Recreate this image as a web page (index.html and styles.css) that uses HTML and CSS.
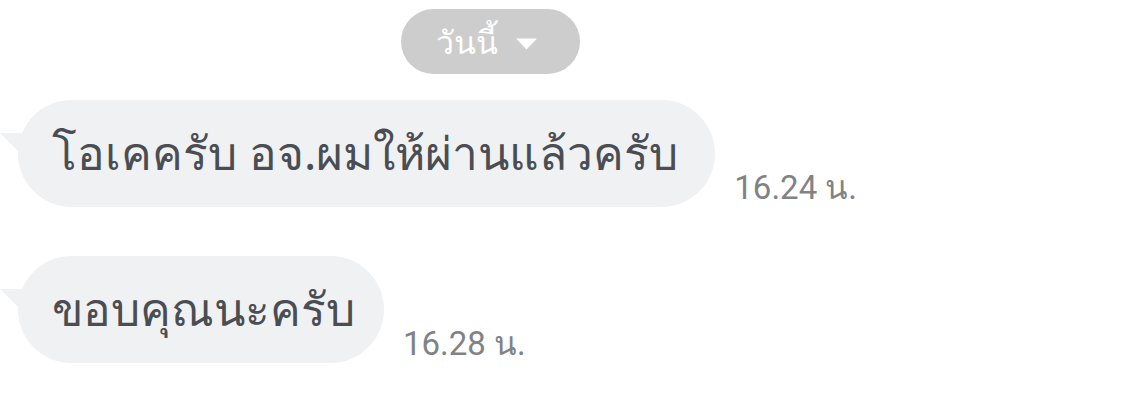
FILE: index.html
```html
<!DOCTYPE html>
<html lang="th">
<head>
<meta charset="utf-8">
<link rel="stylesheet" href="styles.css">
</head>
<body>
<div class="chat">
  <div class="date-row">
    <div class="date-pill">
      <span class="date-text">วันนี้</span>
      <svg class="caret" width="21" height="12" viewBox="0 0 21 12"><path d="M0 0.5 L21 0.5 L10.5 11.5 Z" fill="#ffffff"/></svg>
    </div>
  </div>
  <div class="msg msg-1">
    <div class="bubble">โอเคครับ อจ.ผมให้ผ่านแล้วครับ</div>
    <div class="time">16.24 น.</div>
  </div>
  <div class="msg msg-2">
    <div class="bubble">ขอบคุณนะครับ</div>
    <div class="time">16.28 น.</div>
  </div>
</div>
</body>
</html>
```
FILE: styles.css
```css
html, body {
  margin: 0;
  padding: 0;
  background: #ffffff;
}
body {
  font-family: "Noto Sans", "Roboto", sans-serif;
}
.chat {
  display: flex;
  flex-direction: column;
  padding-top: 9px;
}
.date-row {
  display: flex;
  padding-left: 401px;
}
.date-pill {
  width: 179px;
  height: 65px;
  border-radius: 33px;
  background: #cdcdcd;
  display: flex;
  align-items: center;
  padding-left: 35px;
  gap: 18px;
  box-sizing: border-box;
}
.date-text {
  color: #ffffff;
  font-size: 32px;
  line-height: 1;
}
.caret {
  display: block;
  margin-top: 4px;
}
.msg {
  display: flex;
  align-items: flex-end;
  padding-left: 18px;
  gap: 19px;
}
.msg-1 {
  margin-top: 26px;
}
.msg-2 {
  margin-top: 49px;
}
.bubble {
  position: relative;
  height: 107px;
  box-sizing: border-box;
  padding: 0 37px 0 34px;
  border-radius: 54px;
  background: #f0f1f3;
  color: #4a4d52;
  font-size: 46px;
  display: flex;
  align-items: center;
  white-space: nowrap;
}
.msg-2 .bubble {
  padding-right: 29px;
}
.bubble::before {
  content: "";
  position: absolute;
  left: -18px;
  top: 33px;
  width: 0;
  height: 0;
  border-top: 22px solid #f0f1f3;
  border-left: 22px solid transparent;
}
.time {
  font-family: "Roboto", sans-serif;
  font-size: 33px;
  color: #808285;
  line-height: 1;
  padding-bottom: 3px;
}
```
